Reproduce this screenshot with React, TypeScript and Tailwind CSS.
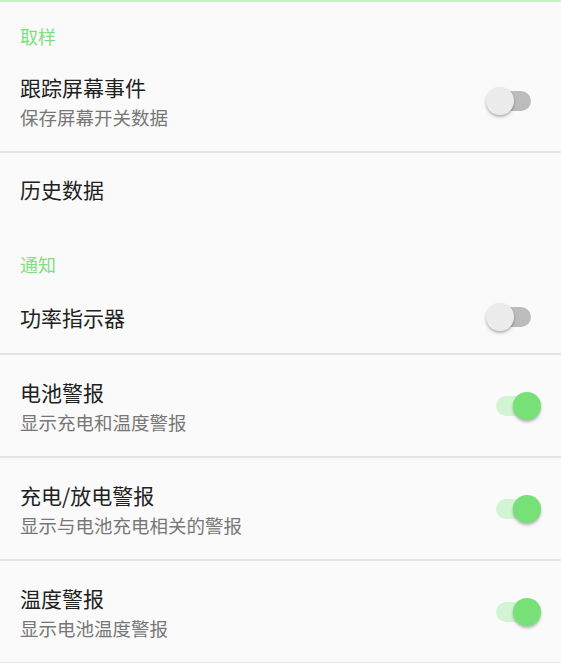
import { useState } from "react";

type Item = { title: string; summary?: string; toggle?: boolean; on?: boolean };

const font = { fontFamily: '"Noto Sans CJK SC", "Noto Sans", sans-serif' };

function Toggle({ on }: { on: boolean }) {
  return (
    <div className="relative w-[55px] h-[28px] shrink-0">
      <div
        className={`absolute left-[10px] right-[10px] top-[4px] h-[20px] rounded-full ${
          on ? "bg-[#d3f4d3]" : "bg-[#bcbcbc]"
        }`}
      />
      <div
        className={`absolute top-0 w-[28px] h-[28px] rounded-full shadow-[0_2px_3px_rgba(0,0,0,0.28)] ${
          on ? "right-0 bg-[#77e177]" : "left-0 bg-[#ececec]"
        }`}
      />
    </div>
  );
}

function Row({ item }: { item: Item }) {
  const [on, setOn] = useState(!!item.on);
  const tall = !!item.summary;
  return (
    <div
      className={`flex items-center justify-between pl-[20px] pr-[20px] ${tall ? "h-[101px]" : "h-[72px]"}`}
      onClick={() => item.toggle && setOn(!on)}
    >
      <div className="flex flex-col">
        <span className="text-[21px] leading-[28px] text-[#212121]">{item.title}</span>
        {item.summary && (
          <span className="text-[18.5px] leading-[24px] mt-[4px] text-[#777777]">{item.summary}</span>
        )}
      </div>
      {item.toggle && <Toggle on={on} />}
    </div>
  );
}

function Divider() {
  return <div className="h-[2px] bg-[#e4e4e4]" />;
}

export default function App() {
  return (
    <div className="w-[561px] h-[663px] bg-[#fafafa] overflow-hidden" style={font}>
      <div className="h-[2px] bg-[#c6f2c6]" />

      <div className="h-[48px] pt-[22px] pl-[20px] text-[18px] leading-[24px] text-[#7fdf7f]">取样</div>
      <Row item={{ title: "跟踪屏幕事件", summary: "保存屏幕开关数据", toggle: true }} />
      <Divider />
      <Row item={{ title: "历史数据" }} />

      <div className="h-[56px] pt-[27px] pl-[20px] text-[18px] leading-[24px] text-[#7fdf7f]">通知</div>
      <Row item={{ title: "功率指示器", toggle: true }} />
      <Divider />
      <Row item={{ title: "电池警报", summary: "显示充电和温度警报", toggle: true, on: true }} />
      <Divider />
      <Row item={{ title: "充电/放电警报", summary: "显示与电池充电相关的警报", toggle: true, on: true }} />
      <Divider />
      <Row item={{ title: "温度警报", summary: "显示电池温度警报", toggle: true, on: true }} />
      <Divider />
    </div>
  );
}
